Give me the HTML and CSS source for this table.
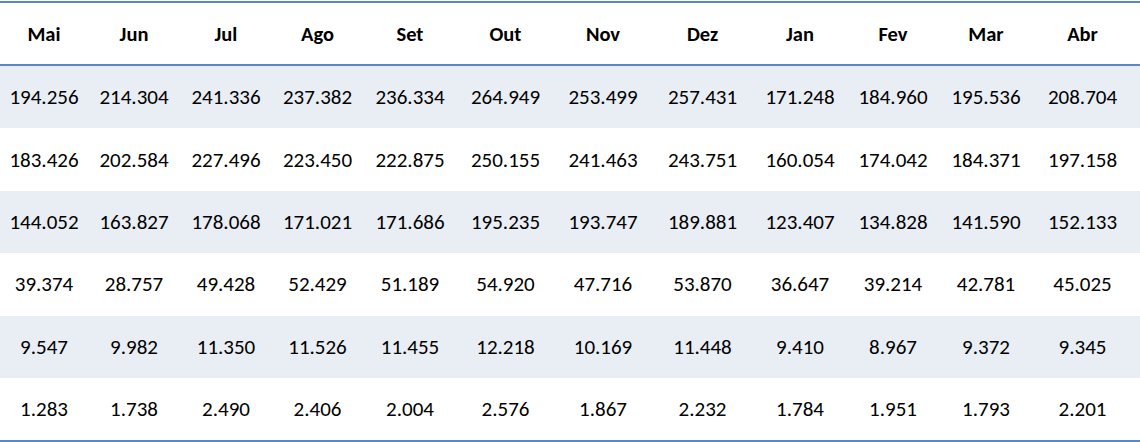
FILE: index.html
```html
<!DOCTYPE html>
<html lang="pt">
<head>
<meta charset="utf-8">
<link rel="stylesheet" href="styles.css">
</head>
<body>
<table class="data">
  <colgroup>
    <col class="c1"><col class="c2"><col class="c3"><col class="c4"><col class="c5"><col class="c6">
    <col class="c7"><col class="c8"><col class="c9"><col class="c10"><col class="c11"><col class="c12">
  </colgroup>
  <thead>
    <tr><th>Mai</th><th>Jun</th><th>Jul</th><th>Ago</th><th>Set</th><th>Out</th><th>Nov</th><th>Dez</th><th>Jan</th><th>Fev</th><th>Mar</th><th>Abr</th></tr>
  </thead>
  <tbody>
    <tr class="band"><td>194.256</td><td>214.304</td><td>241.336</td><td>237.382</td><td>236.334</td><td>264.949</td><td>253.499</td><td>257.431</td><td>171.248</td><td>184.960</td><td>195.536</td><td>208.704</td></tr>
    <tr><td>183.426</td><td>202.584</td><td>227.496</td><td>223.450</td><td>222.875</td><td>250.155</td><td>241.463</td><td>243.751</td><td>160.054</td><td>174.042</td><td>184.371</td><td>197.158</td></tr>
    <tr class="band"><td>144.052</td><td>163.827</td><td>178.068</td><td>171.021</td><td>171.686</td><td>195.235</td><td>193.747</td><td>189.881</td><td>123.407</td><td>134.828</td><td>141.590</td><td>152.133</td></tr>
    <tr><td>39.374</td><td>28.757</td><td>49.428</td><td>52.429</td><td>51.189</td><td>54.920</td><td>47.716</td><td>53.870</td><td>36.647</td><td>39.214</td><td>42.781</td><td>45.025</td></tr>
    <tr class="band"><td>9.547</td><td>9.982</td><td>11.350</td><td>11.526</td><td>11.455</td><td>12.218</td><td>10.169</td><td>11.448</td><td>9.410</td><td>8.967</td><td>9.372</td><td>9.345</td></tr>
    <tr><td>1.283</td><td>1.738</td><td>2.490</td><td>2.406</td><td>2.004</td><td>2.576</td><td>1.867</td><td>2.232</td><td>1.784</td><td>1.951</td><td>1.793</td><td>2.201</td></tr>
  </tbody>
</table>
</body>
</html>
```

FILE: styles.css
```css
html, body {
  margin: 0;
  padding: 0;
  background: #ffffff;
}
body {
  padding-top: 1px;
}
.data {
  width: 1140px;
  border-collapse: collapse;
  table-layout: fixed;
  font-family: Carlito, Lato, "Open Sans", sans-serif;
  color: #000000;
  border-top: 2px solid #5b87c8;
  border-bottom: 2px solid #5b87c8;
}
.c1 { width: 88px; }
.c2 { width: 92px; }
.c3 { width: 92px; }
.c4 { width: 91px; }
.c5 { width: 94px; }
.c6 { width: 97px; }
.c7 { width: 98px; }
.c8 { width: 101px; }
.c9 { width: 94px; }
.c10 { width: 92px; }
.c11 { width: 94px; }
.c12 { width: 107px; }
.data th {
  height: 61px;
  padding: 0;
  font-weight: 700;
  font-size: 20.5px;
  text-align: center;
  border-bottom: 2px solid #5b87c8;
}
.data td {
  height: 62.4px;
  padding: 0;
  font-size: 21px;
  text-align: center;
}
.data th:last-child,
.data td:last-child {
  padding-right: 8px;
}
.data tr.band td {
  background: #e9edf4;
}
```
